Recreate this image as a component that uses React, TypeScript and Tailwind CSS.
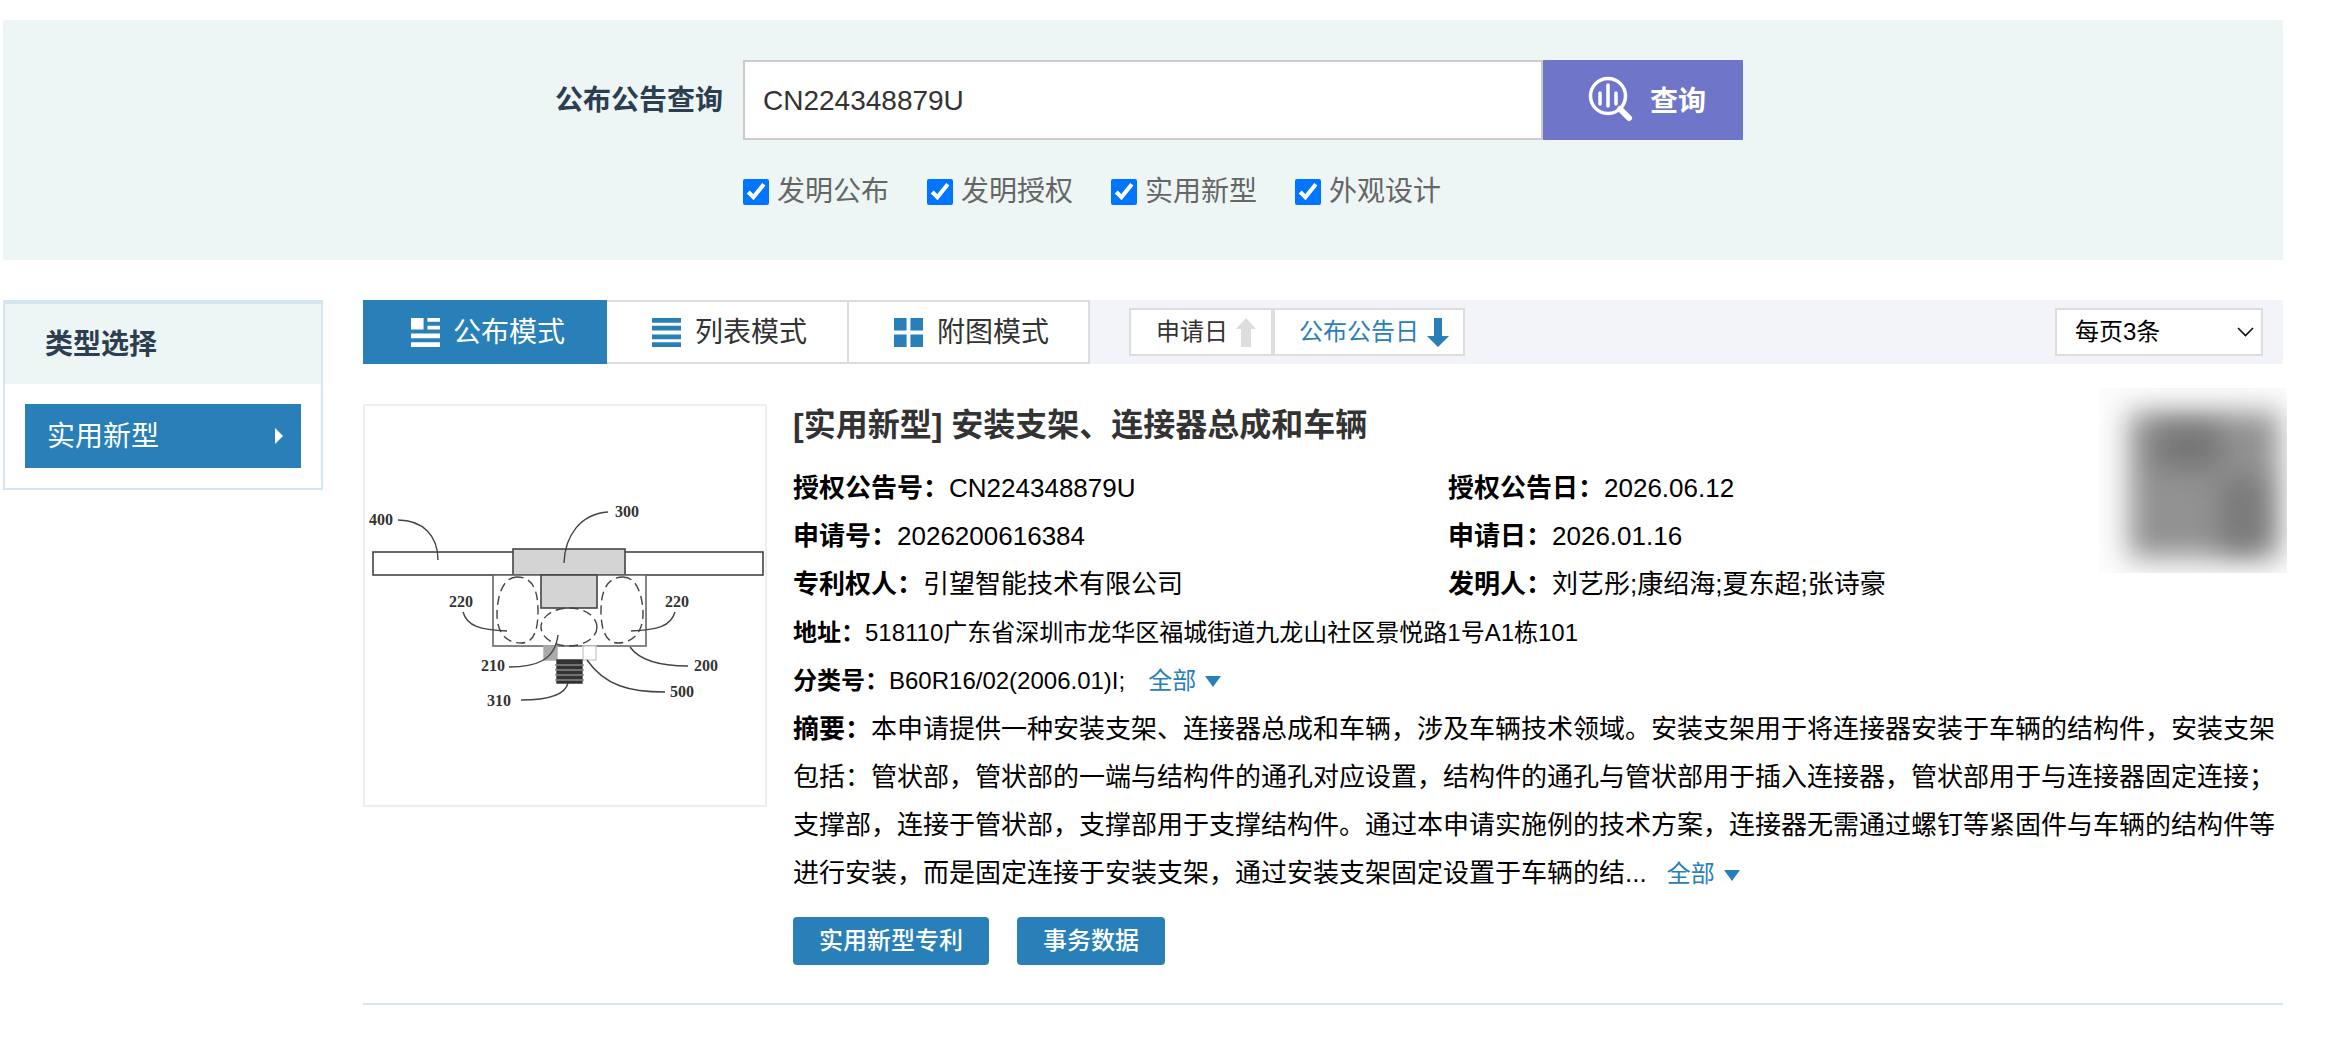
import React from "react";

const checks = ["发明公布", "发明授权", "实用新型", "外观设计"];

function Diagram() {
  return (
    <svg viewBox="0 0 400 399" className="w-full h-full" fill="none" stroke="#444" strokeWidth="1.4">
      <rect x="8" y="146" width="390" height="23" fill="#fff" strokeWidth="1.6" />
      <rect x="148" y="143" width="112" height="26" fill="#d4d4d4" strokeWidth="1.6" />
      <rect x="128" y="169" width="153" height="71" fill="#fff" stroke="#666" strokeWidth="1.6" />
      <rect x="176" y="169" width="56" height="33" fill="#d4d4d4" strokeWidth="1.6" />
      <rect x="179" y="240" width="13" height="14" fill="#aaa" stroke="#aaa" />
      <rect x="218" y="240" width="13" height="14" fill="#fff" stroke="#ccc" />
      <g strokeDasharray="9 5">
        <path d="M152 171 C136 171 132 195 132 208 C132 228 142 237 156 237 C170 237 173 222 173 205 C173 185 168 171 152 171Z" />
        <path d="M258 171 C274 171 278 195 278 208 C278 228 266 237 253 237 C240 237 236 222 236 205 C236 185 242 171 258 171Z" />
        <ellipse cx="204" cy="221" rx="28" ry="19" />
      </g>
      <path d="M192 254h25v23h-25z" fill="#333" stroke="#333" />
      <path d="M190 259h29M190 264h29M190 269h29M190 274h29" stroke="#888" />
      <path d="M33 114 C58 114 73 130 73 154" />
      <path d="M243 106 C215 108 200 130 199 157" />
      <path d="M98 206 C102 220 115 224 142 225" />
      <path d="M310 206 C306 220 293 224 266 225" />
      <path d="M144 261 C170 261 190 255 193 229" />
      <path d="M323 260 C295 260 275 255 265 241" />
      <path d="M300 286 C265 286 240 280 222 254" />
      <path d="M156 294 C180 294 200 290 203 277" />
      <g
        fill="#333"
        stroke="none"
        fontFamily="'Liberation Serif', serif"
        fontSize="16"
        fontWeight="700"
      >
        <text x="4" y="119">400</text>
        <text x="250" y="111">300</text>
        <text x="84" y="201">220</text>
        <text x="300" y="201">220</text>
        <text x="116" y="265">210</text>
        <text x="329" y="265">200</text>
        <text x="305" y="291">500</text>
        <text x="122" y="300">310</text>
      </g>
    </svg>
  );
}

function Row({ label, value }: { label: string; value: string }) {
  return (
    <div className="h-12 flex items-center whitespace-nowrap">
      <b className="font-semibold">{label}：</b>
      <span>{value}</span>
    </div>
  );
}

export default function App() {
  return (
    <div
      className="w-[2332px] h-[1044px] bg-white overflow-hidden relative"
      style={{ fontFamily: "'Liberation Sans', 'Noto Sans CJK SC', sans-serif" }}
    >
      {/* search band */}
      <div className="mt-5 ml-[3px] w-[2280px] h-60 bg-[#edf6f5] pt-10 pl-[552px]">
        <div className="flex items-center h-20">
          <label className="text-[28px] font-semibold text-[#2c3e50] w-[188px] pt-[2px]">公布公告查询</label>
          <div className="w-[800px] h-20 bg-white border-2 border-[#cccccc] flex items-center pl-[18px] pt-[2px] text-[28px] text-[#333]">
            CN224348879U
          </div>
          <button className="w-[200px] h-20 bg-[#6f75c9] flex items-center pl-[44px] text-white text-[28px] font-semibold">
            <svg viewBox="0 0 48 48" className="w-[48px] h-[48px]" fill="none" stroke="#fff">
              <circle cx="21" cy="20" r="17.5" strokeWidth="3.5" />
              <path d="M21 9v21M13 17v11M29 17v11" strokeWidth="3.5" strokeLinecap="round" />
              <path d="M33 33l9 9" strokeWidth="6" strokeLinecap="round" />
            </svg>
            <span className="ml-[15px] pt-[3px]">查询</span>
          </button>
        </div>
        <div className="ml-[188px] mt-[32px] flex items-center gap-[38px]">
          {checks.map((c) => (
            <label key={c} className="flex items-center text-[28px] text-[#666] h-[40px]">
              <input type="checkbox" defaultChecked className="w-[26px] h-[26px] accent-[#0075ff] m-0" />
              <span className="ml-2">{c}</span>
            </label>
          ))}
        </div>
      </div>

      <div className="mt-10 ml-[3px] flex w-[2280px]">
        {/* type sidebar */}
        <aside className="w-[320px] h-[190px] border-2 border-t-4 border-[#d4e6f1] shrink-0">
          <div className="h-20 bg-[#edf6f5] pl-[40px] pt-[2px] flex items-center text-[28px] font-semibold text-[#2c3e50]">
            类型选择
          </div>
          <div className="mt-5 mx-5 h-16 bg-[#2980b9] text-white text-[28px] flex items-center justify-between pl-[22px] pr-[18px]">
            <span className="pt-[2px]">实用新型</span>
            <span className="w-0 h-0 border-y-[8px] border-y-transparent border-l-[8px] border-l-white" />
          </div>
        </aside>

        <main className="ml-10 flex-1">
          {/* toolbar */}
          <div className="h-16 flex bg-[#f2f4f9]">
            <div className="w-[244px] bg-[#2980b9] text-white text-[28px] flex items-center pl-[48px] gap-[13px]">
              <svg viewBox="0 0 30 30" className="w-[29px] h-[29px] shrink-0" fill="#fff">
                <path d="M0 0h13v12H0zM17 0h13v4H17zM17 8h13v4H17zM0 16h30v5H0zM0 25h30v5H0z" />
              </svg>
              <span className="pt-[2px]">公布模式</span>
            </div>
            <div className="w-[242px] bg-white border-2 border-l-0 border-[#dddddd] text-[28px] text-[#333] flex items-center pl-[45px] gap-[14px]">
              <svg viewBox="0 0 30 30" className="w-[29px] h-[29px] shrink-0" fill="#2980b9">
                <path d="M0 0h30v5H0zM0 8h30v5H0zM0 17h30v5H0zM0 25h30v5H0z" />
              </svg>
              <span className="pt-[2px]">列表模式</span>
            </div>
            <div className="w-[241px] bg-white border-2 border-l-0 border-[#dddddd] text-[28px] text-[#333] flex items-center pl-[45px] gap-[14px]">
              <svg viewBox="0 0 30 30" className="w-[29px] h-[29px] shrink-0" fill="#2980b9">
                <path d="M0 0h13v13H0zM17 0h13v13H17zM0 17h13v13H0zM17 17h13v13H17z" />
              </svg>
              <span className="pt-[2px]">附图模式</span>
            </div>
            <div className="ml-[39px] mt-2 h-12 flex text-2xl">
              <div className="w-[144px] bg-white border-2 border-[#dddddd] flex items-center pl-[25px] text-[#333]">
                申请日
                <svg viewBox="0 0 20 29" className="w-5 h-[29px] ml-2" fill="#dddddd">
                  <path d="M10 0l10 11h-5v18H5V11H0z" />
                </svg>
              </div>
              <div className="w-[192px] bg-white border-2 border-[#dddddd] flex items-center pl-6 text-[#2980b9]">
                公布公告日
                <svg viewBox="0 0 22 29" className="w-[22px] h-[29px] ml-2" fill="#2980b9">
                  <path d="M7 0h8v18h7L11 29 0 18h7z" />
                </svg>
              </div>
            </div>
            <div className="ml-auto mr-5 mt-2 w-[208px] h-12 bg-white border-2 border-[#dddddd] flex items-center justify-between pl-[18px] pr-[7px] text-2xl text-black">
              每页3条
              <svg viewBox="0 0 17 10" className="w-[17px] h-[10px]" fill="none" stroke="#111" strokeWidth="1.6">
                <path d="M1 1l7.5 7.5L16 1" />
              </svg>
            </div>
          </div>

          {/* result */}
          <div className="mt-10 flex h-[601px] border-b-2 border-[#d4e6f1]">
            <div className="w-[404px] h-[403px] border-2 border-[#eeeeee] shrink-0">
              <Diagram />
            </div>
            <div className="ml-[26px] flex-1 text-[26px] text-black">
              <h3 className="text-[32px] font-semibold text-[#333] leading-[42px]">[实用新型] 安装支架、连接器总成和车辆</h3>
              <div className="mt-[18px] grid grid-cols-[655px_1fr]">
                <Row label="授权公告号" value="CN224348879U" />
                <Row label="授权公告日" value="2026.06.12" />
                <Row label="申请号" value="2026200616384" />
                <Row label="申请日" value="2026.01.16" />
                <Row label="专利权人" value="引望智能技术有限公司" />
                <Row label="发明人" value="刘艺彤;康绍海;夏东超;张诗豪" />
              </div>
              <div className="mt-px text-2xl">
                <Row label="地址" value="518110广东省深圳市龙华区福城街道九龙山社区景悦路1号A1栋101" />
                <div className="h-12 flex items-center whitespace-nowrap">
                  <b className="font-semibold">分类号：</b>
                  B60R16/02(2006.01)I;
                  <span className="ml-[23px] text-[#2980b9] flex items-center">
                    全部
                    <span className="ml-[9px] w-0 h-0 border-x-[8px] border-x-transparent border-t-[11px] border-t-[#2980b9]" />
                  </span>
                </div>
              </div>
              <p className="leading-[48px] w-[1489px]">
                <b className="font-semibold">摘要：</b>
                本申请提供一种安装支架、连接器总成和车辆，涉及车辆技术领域。安装支架用于将连接器安装于车辆的结构件，安装支架包括：管状部，管状部的一端与结构件的通孔对应设置，结构件的通孔与管状部用于插入连接器，管状部用于与连接器固定连接；支撑部，连接于管状部，支撑部用于支撑结构件。通过本申请实施例的技术方案，连接器无需通过螺钉等紧固件与车辆的结构件等进行安装，而是固定连接于安装支架，通过安装支架固定设置于车辆的结...
                <span className="ml-5 text-2xl text-[#2980b9]">
                  全部
                  <span className="inline-block align-middle ml-[9px] w-0 h-0 border-x-[8px] border-x-transparent border-t-[11px] border-t-[#2980b9]" />
                </span>
              </p>
              <div className="mt-5 flex gap-7">
                <button className="h-12 px-[26px] rounded bg-[#2980b9] text-white text-2xl font-medium">实用新型专利</button>
                <button className="h-12 px-[26px] rounded bg-[#2980b9] text-white text-2xl font-medium">事务数据</button>
              </div>
            </div>
          </div>
        </main>
      </div>

      {/* blurred qr code, sticks out past the band */}
      <div className="absolute left-[2099px] top-[388px] w-[188px] h-[185px] bg-[#fcfcfc] overflow-hidden">
        <div className="absolute left-[30px] top-[24px] w-[150px] h-[146px] bg-[#929292] blur-[14px]" />
        <div className="absolute left-[58px] top-[38px] w-[64px] h-[42px] bg-[#747474] blur-[14px]" />
        <div className="absolute left-[122px] top-[90px] w-[42px] h-[70px] bg-[#787878] blur-[14px]" />
      </div>
    </div>
  );
}
